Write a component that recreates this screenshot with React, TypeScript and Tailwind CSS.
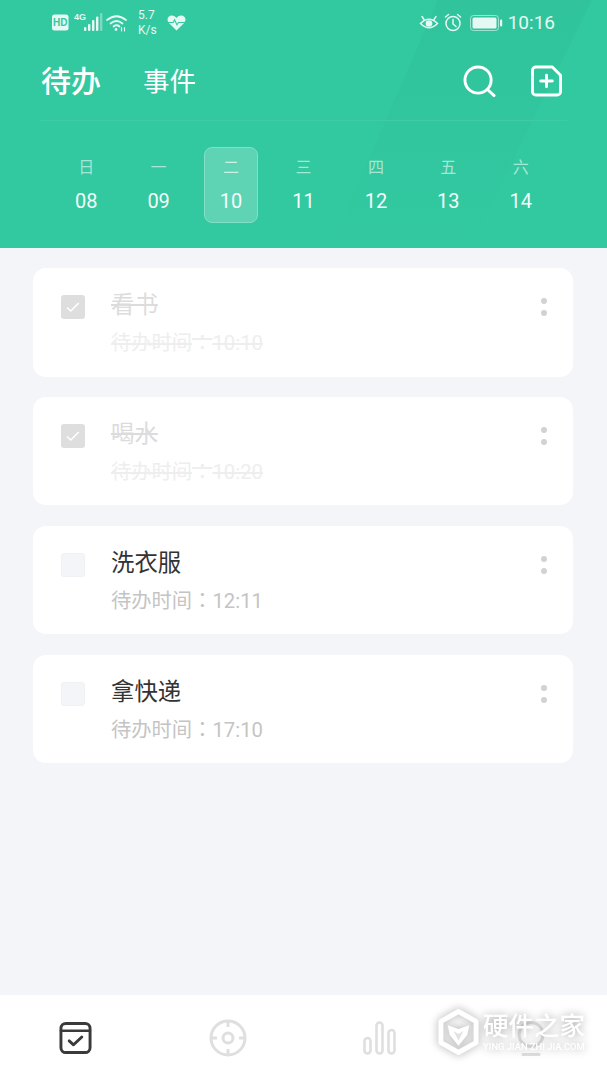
import React from "react";

const cjk = "font-['Roboto','Noto_Sans_CJK_SC',sans-serif]";
const cjkTc = "font-['Noto_Sans_CJK_TC',sans-serif]";

const days = [
  ["日", "08"],
  ["一", "09"],
  ["二", "10"],
  ["三", "11"],
  ["四", "12"],
  ["五", "13"],
  ["六", "14"],
];

const todos = [
  { title: "看书", time: "10:10", done: true },
  { title: "喝水", time: "10:20", done: true },
  { title: "洗衣服", time: "12:11", done: false },
  { title: "拿快递", time: "17:10", done: false },
];

function StatusLeft() {
  return (
    <div className="flex items-center text-[#e6f8f3]">
      <svg width="17" height="17" viewBox="0 0 17 17" className="ml-[52px]">
        <rect x="0" y="0.5" width="16.5" height="16" rx="2.5" fill="#e6f8f3" />
        <text x="8.2" y="12.4" textAnchor="middle" fontSize="10" fontWeight="700" fill="#32c8a0" fontFamily="Liberation Sans">HD</text>
      </svg>
      <svg width="29" height="20" viewBox="0 0 29 20" className="ml-[5px] mb-[1px]">
        <text x="0" y="8" fontSize="9" fontWeight="700" fill="#e6f8f3" fontFamily="Liberation Sans">4G</text>
        <rect x="10" y="15" width="2.4" height="4" rx="1" fill="#e6f8f3" />
        <rect x="14" y="12" width="2.4" height="7" rx="1" fill="#e6f8f3" />
        <rect x="18" y="8" width="2.4" height="11" rx="1" fill="#e6f8f3" />
        <rect x="22" y="4.5" width="2.4" height="14.5" rx="1" fill="#e6f8f3" />
        <rect x="26" y="1" width="2.4" height="18" rx="1" fill="#e6f8f3" opacity="0.4" />
      </svg>
      <svg width="22" height="18" viewBox="0 0 22 18" fill="none" stroke="#e6f8f3" strokeWidth="1.7" strokeLinecap="round" className="ml-[3px]">
        <path d="M1 6 Q10.5 -1.5 20 6" />
        <path d="M4.5 9.5 Q10.5 4.5 16.5 9.5" />
        <path d="M7.5 12.5 Q10.5 10 13.5 12.5" />
        <circle cx="10" cy="15.5" r="1.4" fill="#e6f8f3" stroke="none" />
        <path d="M15.5 13.5v3.5M18.5 13.5v3.5" strokeWidth="1.2" />
      </svg>
      <div className={`ml-[10px] w-[24px] text-[12px] leading-[15px] ${cjk}`}>
        <div>5.7</div>
        <div>K/s</div>
      </div>
      <svg width="19" height="18" viewBox="0 0 20 18" className="ml-[5px]">
        <path d="M10 17 L2 9 C-1 5.5 1 1 5 1 C7.5 1 9 2.3 10 3.8 C11 2.3 12.5 1 15 1 C19 1 21 5.5 18 9 Z" fill="#e6f8f3" />
        <path d="M1 8.5h5.5l1.5-3 2.5 5.5 1.5-2.5h7" fill="none" stroke="#32c8a0" strokeWidth="1.1" />
      </svg>
    </div>
  );
}

function StatusRight() {
  return (
    <div className="flex items-center text-[#e6f8f3]">
      <svg width="20" height="18" viewBox="0 0 20 18" fill="none" stroke="#e6f8f3" strokeWidth="1.5" strokeLinecap="round">
        <path d="M1.5 9.5 Q10 1 18.5 9.5 Q10 18 1.5 9.5 Z" />
        <circle cx="10" cy="9.5" r="3.3" fill="#e6f8f3" stroke="none" />
        <path d="M3 2.5l2 3M17 2.5l-2 3" />
      </svg>
      <svg width="18" height="19" viewBox="0 0 18 19" fill="none" stroke="#e6f8f3" strokeWidth="1.5" strokeLinecap="round" className="ml-[5px]">
        <circle cx="9" cy="10.5" r="7" />
        <path d="M9 6.5v4.5l3 2.5" />
        <path d="M1.5 4L4.5 1.5M16.5 4L13.5 1.5" />
      </svg>
      <svg width="33" height="16" viewBox="0 0 33 16" className="ml-[8px]">
        <rect x="0.5" y="0.5" width="28" height="15" rx="3" fill="none" stroke="#e6f8f3" strokeOpacity="0.6" />
        <rect x="2.5" y="2.5" width="24" height="11" rx="1.5" fill="#e6f8f3" />
        <rect x="30" y="4.5" width="2.2" height="7" rx="1" fill="#e6f8f3" />
      </svg>
      <span className={`ml-[5px] text-[19px] leading-[24px] ${cjk}`}>10:16</span>
    </div>
  );
}

function Checkbox({ done }: { done: boolean }) {
  if (done) {
    return (
      <div className="w-6 h-6 shrink-0 rounded-[3px] bg-[#dedede] flex items-center justify-center">
        <svg width="16" height="16" viewBox="0 0 16 16" fill="none" stroke="#ffffff" strokeWidth="1.6">
          <path d="M2 8.5l3.8 3.5 8-8" />
        </svg>
      </div>
    );
  }
  return <div className="w-6 h-6 shrink-0 rounded-[3px] bg-[#f4f5f9] border border-[#f0f1f5]" />;
}

function Card({ title, time, done }: { title: string; time: string; done: boolean }) {
  return (
    <div className="h-[108.5px] bg-white rounded-[13px] flex pl-[28px] pr-[26px] pt-[27px]">
      <Checkbox done={done} />
      <div className="ml-[26px] flex-1 -mt-[8px]">
        <div className={`h-[36px] text-[23.4px] leading-[36px] ${done ? "text-[#dcdcdc] line-through" : "text-[#333333]"} ${cjk}`}>{title}</div>
        <div className={`h-[36px] text-[20.3px] leading-[36px] ${done ? "text-[#eeeeee] line-through" : "text-[#c4c4c4]"} ${cjk}`}>
          待办时间<span className={cjkTc}>：</span>{time}
        </div>
      </div>
      <div className="flex flex-col gap-[6px] items-center pt-[3px]">
        <span className="w-[6px] h-[6px] rounded-full bg-[#d2d2d2]" />
        <span className="w-[6px] h-[6px] rounded-full bg-[#d2d2d2]" />
      </div>
    </div>
  );
}

export default function App() {
  return (
    <div className={`relative w-[607px] h-[1080px] overflow-hidden flex flex-col bg-[#f4f5f9] ${cjk}`}>
      <header className="relative h-[248px] shrink-0 bg-[#32c8a0] overflow-hidden">
        <svg width="607" height="248" viewBox="0 0 607 248" className="absolute inset-0">
          <defs>
            <linearGradient id="sheen" x1="0" y1="0" x2="0" y2="1">
              <stop offset="0" stopColor="#2dbd97" stopOpacity="0.4" />
              <stop offset="1" stopColor="#2dbd97" stopOpacity="0" />
            </linearGradient>
          </defs>
          <polygon points="438,0 592,0 470,248 330,248" fill="url(#sheen)" />
        </svg>
        <div className="relative">
          <div className="h-[44px] pt-[1px] pr-[52px] flex items-center justify-between">
            <StatusLeft />
            <StatusRight />
          </div>
          <div className="h-[77px] mx-[40px] pl-[1px] pr-[5px] flex items-center border-b border-[#3dcca6]">
            <span className={`text-[30px] leading-[40px] text-white font-medium ${cjk}`}>待办</span>
            <span className={`ml-[42px] text-[26.5px] leading-[40px] text-white ${cjk}`}>事件</span>
            <div className="ml-auto flex items-center gap-[35px] -mt-[2px]">
              <svg width="33" height="33" viewBox="0 0 34 34" fill="none" stroke="#ffffff" strokeWidth="3" strokeLinecap="round">
                <circle cx="15.5" cy="15.5" r="13.5" />
                <path d="M25.5 25.5l6.5 6" />
              </svg>
              <svg width="31" height="32" viewBox="0 0 32 32" fill="none" stroke="#ffffff" strokeWidth="3" strokeLinejoin="round" strokeLinecap="round">
                <path d="M5 1.5H22L30.5 10V27a3.5 3.5 0 0 1-3.5 3.5H5A3.5 3.5 0 0 1 1.5 27V5A3.5 3.5 0 0 1 5 1.5Z" />
                <path d="M16 10v12M10 16h12" />
              </svg>
            </div>
          </div>
          <div className="px-[50px] pt-[26px] grid grid-cols-7">
            {days.map(([d, n], i) => (
              <div key={n} className="flex justify-center">
                <div className={`w-[54px] h-[76px] rounded-[8px] flex flex-col items-center pt-[9px] ${i === 2 ? "bg-[#5ed4b4] border border-[#84dfc7]" : "border border-transparent"}`}>
                  <span className={`text-[16px] leading-[22px] ${i === 2 ? "text-[#c9f2e6]" : "text-[#a5e6d4]"} ${cjk}`}>{d}</span>
                  <span className={`mt-[9px] text-[20px] leading-[26px] text-[#f4fcfa] ${cjk}`}>{n}</span>
                </div>
              </div>
            ))}
          </div>
        </div>
      </header>

      <main className="flex-1 pl-[33px] pr-[34px] pt-[20px] flex flex-col gap-[20.4px]">
        {todos.map((t) => (
          <Card key={t.title} {...t} />
        ))}
      </main>

      <nav className="h-[85px] shrink-0 bg-white grid grid-cols-4 items-center">
        <div className="flex justify-center">
          <svg width="33" height="34" viewBox="0 0 34 34" fill="none" stroke="#3a3a3a" strokeWidth="3" strokeLinecap="round" strokeLinejoin="round">
            <rect x="2" y="2" width="30" height="30" rx="5" />
            <path d="M2 9.5h30" strokeWidth="2.5" />
            <path d="M10.5 20l4.5 4 8.5-8" strokeWidth="3" />
          </svg>
        </div>
        <div className="flex justify-center">
          <svg width="38" height="38" viewBox="0 0 38 38" fill="none" stroke="#dfdfdf" strokeWidth="3">
            <circle cx="19" cy="19" r="17" />
            <circle cx="19" cy="19" r="5" />
            <path d="M19 1v7M19 30v7M1 19h7M30 19h7" />
          </svg>
        </div>
        <div className="flex justify-center">
          <svg width="33" height="34" viewBox="0 0 33 34" fill="none" stroke="#dfdfdf" strokeWidth="2.6">
            <rect x="1.5" y="17" width="6" height="15.5" rx="3" />
            <rect x="13.5" y="1.5" width="6" height="31" rx="3" />
            <rect x="25.5" y="9" width="6" height="23.5" rx="3" />
          </svg>
        </div>
        <div className="flex justify-center">
          <svg width="36" height="38" viewBox="0 0 36 38" fill="none" stroke="#dfdfdf" strokeWidth="3">
            <circle cx="18" cy="15.5" r="12" />
            <path d="M10 35.5h16" strokeLinecap="round" />
          </svg>
        </div>
      </nav>

      {/* watermark overlay */}
      <div className="absolute left-[438px] top-[1008px] flex items-start drop-shadow-[0_0_4px_rgba(0,0,0,0.35)]">
        <svg width="41" height="48" viewBox="0 0 42 48">
          <path d="M21 3L39 13V35L21 45L3 35V13Z" fill="none" stroke="#ffffff" strokeWidth="5" strokeLinejoin="round" />
          <path d="M10 17L21 21L32 17L30 27L21 38L12 27Z" fill="#ffffff" />
          <path d="M16 23L21 26L26 23L21 33Z" fill="#e2e2e2" />
        </svg>
        <div className="ml-[4px] pt-[3px] flex flex-col text-white">
          <span className={`text-[25.5px] leading-[30px] font-medium whitespace-nowrap ${cjk}`}>硬件之家</span>
          <span className={`text-[9.4px] leading-[12px] font-medium whitespace-nowrap ${cjk}`}>YING JIAN ZHI JIA.COM</span>
        </div>
      </div>
    </div>
  );
}
